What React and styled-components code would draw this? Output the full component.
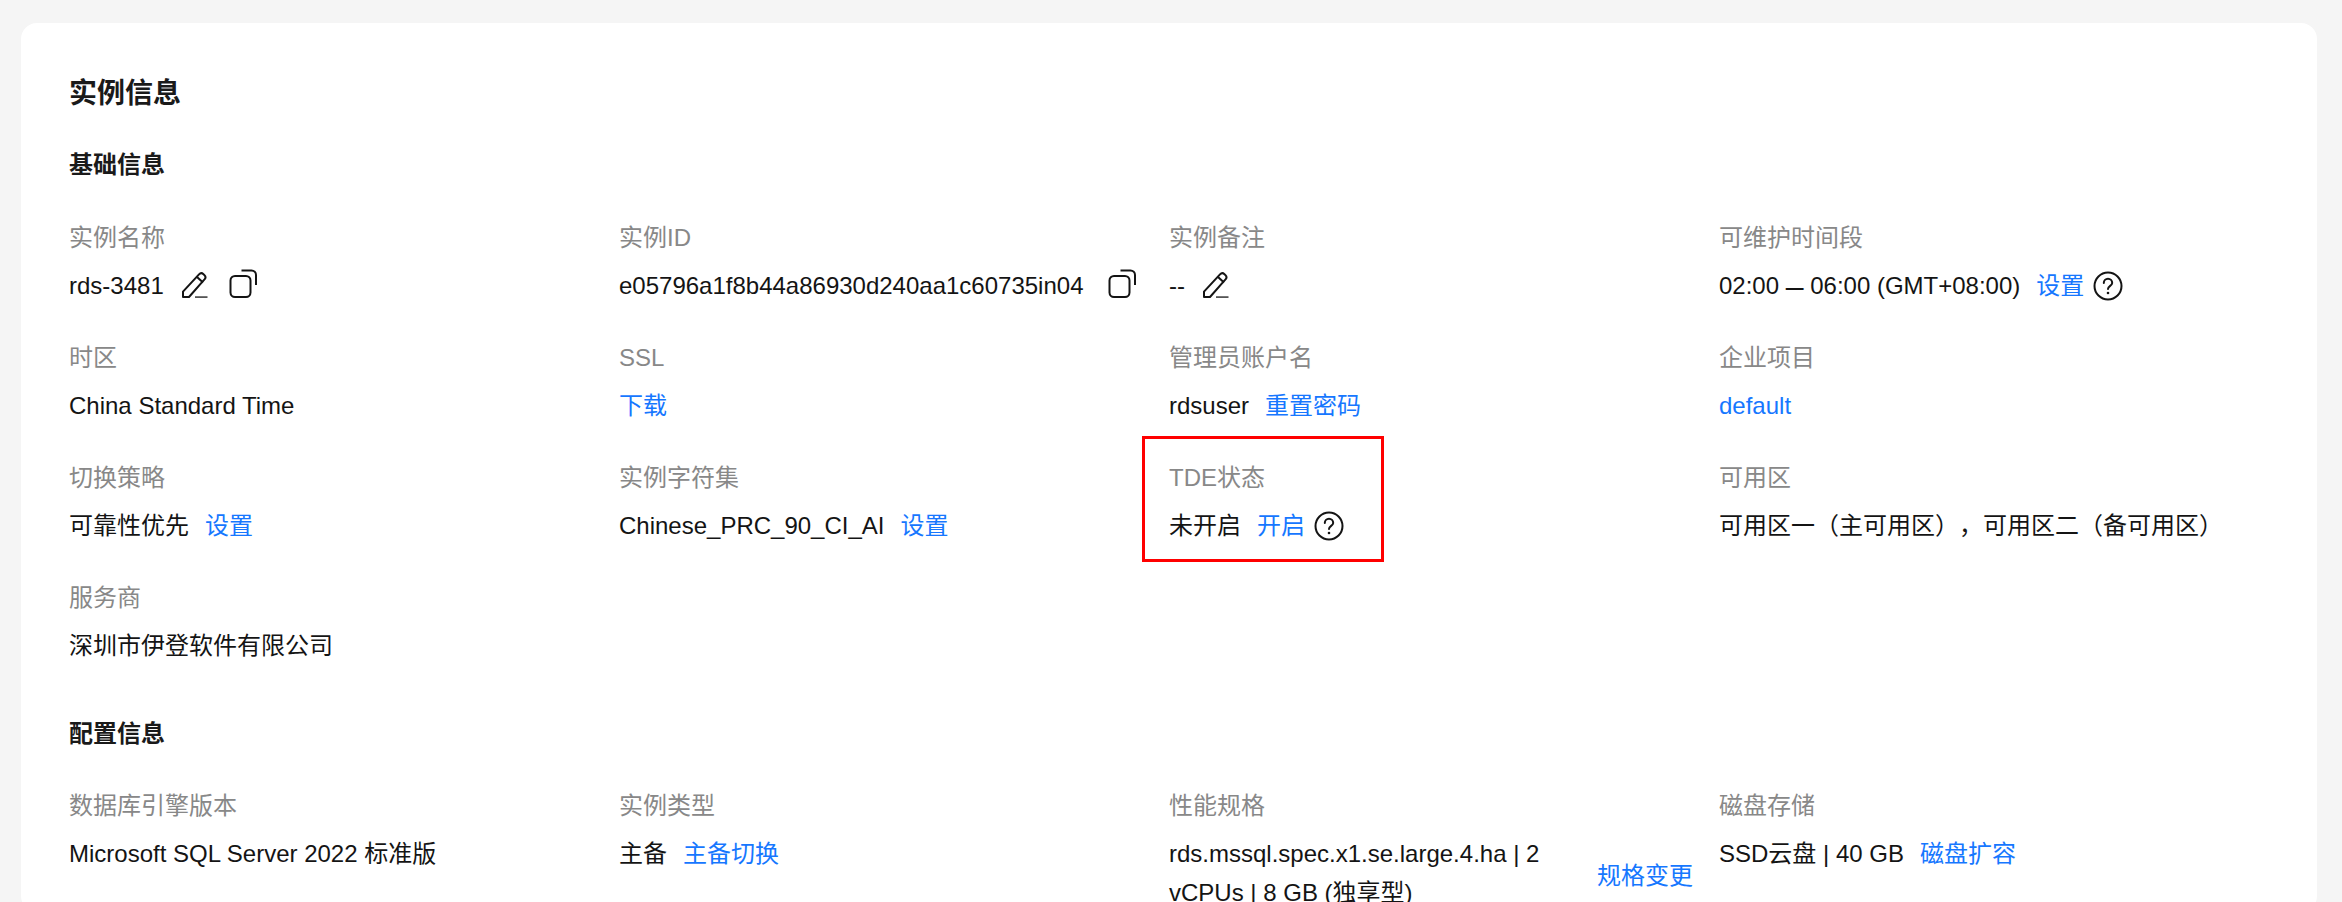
import styled, { createGlobalStyle } from 'styled-components';

const GlobalStyle = createGlobalStyle`
  html, body {
    margin: 0;
    height: 100%;
    overflow: hidden;
    background: #f5f5f5;
  }
  body {
    font-family: "Liberation Sans", "Noto Sans CJK SC", sans-serif;
    color: #141414;
    text-spacing-trim: space-all;
  }
`;

const Page = styled.div`
  padding: 23px 25px 0 21px;
`;

const Card = styled.div`
  background: #fff;
  border-radius: 16px;
  padding: 51px 48px 0;
`;

const PageTitle = styled.h1`
  margin: 0;
  font-size: 28px;
  line-height: 40px;
  font-weight: 700;
  color: #1a1a1a;
`;

const SectionTitle = styled.h2`
  margin: ${(p) => (p.$first ? '33px 0 37px' : '52px 0 36px')};
  font-size: 24px;
  line-height: 36px;
  font-weight: 700;
  color: #1a1a1a;
`;

const FieldGrid = styled.div`
  display: grid;
  grid-template-columns: repeat(4, 550px);
  row-gap: 36px;
`;

const FieldCell = styled.div`
  position: relative;
  min-width: 0;
`;

const FieldLabel = styled.div`
  font-size: 24px;
  line-height: 36px;
  color: #888;
  margin-bottom: 12px;
`;

const FieldValue = styled.div`
  display: flex;
  align-items: center;
  font-size: 24px;
  line-height: 36px;
  white-space: nowrap;
`;

const Link = styled.a`
  color: #1677ff;
  cursor: pointer;
  margin-left: ${(p) => (p.$flush ? '0' : '16px')};
`;

const IconButton = styled.span`
  display: inline-flex;
  flex: none;
  margin-left: ${(p) => p.$gap || 16}px;
  margin-bottom: ${(p) => p.$lift || 0}px;
  cursor: pointer;
`;

const Dash = styled.span`
  font-size: 32px;
  line-height: 1;
  vertical-align: -3px;
`;

const SpecRow = styled.div`
  display: flex;
  align-items: center;
  width: 525px;
  margin-top: -2px;
  font-size: 24px;
`;

const SpecText = styled.div`
  width: 412px;
  line-height: 39px;
  flex: none;
`;

const Highlight = styled.div`
  position: absolute;
  left: -27px;
  top: -24px;
  width: 242px;
  height: 126px;
  box-sizing: border-box;
  border: 3px solid #f00;
  pointer-events: none;
`;

const PencilIcon = () => (
  <svg width="26" height="26" viewBox="0 0 26 26" fill="none" stroke="#141414" strokeWidth="2">
    <path d="M1 25v-5.4L17 2.4a3.2 3.2 0 0 1 4.5-.2l.8.7a3.2 3.2 0 0 1 .2 4.5L7 25z" strokeLinejoin="round" />
    <path d="M15 5l6 5.6" />
    <path d="M13 25.2h12.5" stroke="#555" />
  </svg>
);

const CopyIcon = () => (
  <svg width="28" height="29" viewBox="0 0 28 29" fill="none" stroke="#141414" strokeWidth="2">
    <rect x="1.5" y="7" width="20" height="21" rx="4.5" />
    <path d="M12.5 1.5h10a4.5 4.5 0 0 1 4.5 4.5v10" />
  </svg>
);

const HelpIcon = () => (
  <svg width="30" height="30" viewBox="0 0 30 30" fill="none" stroke="#141414" strokeWidth="2">
    <circle cx="15" cy="15" r="13.5" />
    <path d="M10.8 12a4.2 4.2 0 0 1 8.4 0c0 2.8-4.2 3-4.2 6" strokeLinecap="round" />
    <circle cx="15" cy="22" r="1.3" fill="#141414" stroke="none" />
  </svg>
);

const Field = ({ label, children }) => (
  <FieldCell>
    <FieldLabel>{label}</FieldLabel>
    <FieldValue>{children}</FieldValue>
  </FieldCell>
);

const App = () => (
  <Page>
    <GlobalStyle />
    <Card>
      <PageTitle>实例信息</PageTitle>

      <SectionTitle $first>基础信息</SectionTitle>
      <FieldGrid>
        <Field label="实例名称">
          rds-3481
          <IconButton $gap={18} $lift={2}><PencilIcon /></IconButton>
          <IconButton $gap={21} $lift={6}><CopyIcon /></IconButton>
        </Field>
        <Field label="实例ID">
          e05796a1f8b44a86930d240aa1c60735in04
          <IconButton $gap={25} $lift={6}><CopyIcon /></IconButton>
        </Field>
        <Field label="实例备注">
          --
          <IconButton $gap={18} $lift={2}><PencilIcon /></IconButton>
        </Field>
        <Field label="可维护时间段">
          <span>02:00 <Dash>–</Dash> 06:00 (GMT+08:00)</span>
          <Link>设置</Link>
          <IconButton $gap={9}><HelpIcon /></IconButton>
        </Field>

        <Field label="时区">China Standard Time</Field>
        <Field label="SSL"><Link $flush>下载</Link></Field>
        <Field label="管理员账户名">
          rdsuser
          <Link>重置密码</Link>
        </Field>
        <Field label="企业项目"><Link $flush>default</Link></Field>

        <Field label="切换策略">
          可靠性优先
          <Link>设置</Link>
        </Field>
        <Field label="实例字符集">
          Chinese_PRC_90_CI_AI
          <Link>设置</Link>
        </Field>
        <FieldCell>
          <Highlight />
          <FieldLabel>TDE状态</FieldLabel>
          <FieldValue>
            未开启
            <Link>开启</Link>
            <IconButton $gap={9}><HelpIcon /></IconButton>
          </FieldValue>
        </FieldCell>
        <Field label="可用区">可用区一（主可用区），可用区二（备可用区）</Field>

        <Field label="服务商">深圳市伊登软件有限公司</Field>
      </FieldGrid>

      <SectionTitle>配置信息</SectionTitle>
      <FieldGrid>
        <Field label="数据库引擎版本">Microsoft SQL Server 2022 标准版</Field>
        <Field label="实例类型">
          主备
          <Link>主备切换</Link>
        </Field>
        <FieldCell>
          <FieldLabel>性能规格</FieldLabel>
          <SpecRow>
            <SpecText>rds.mssql.spec.x1.se.large.4.ha | 2 vCPUs | 8 GB (独享型)</SpecText>
            <Link>规格变更</Link>
          </SpecRow>
        </FieldCell>
        <Field label="磁盘存储">
          SSD云盘 | 40 GB
          <Link>磁盘扩容</Link>
        </Field>
      </FieldGrid>
    </Card>
  </Page>
);

export default App;
